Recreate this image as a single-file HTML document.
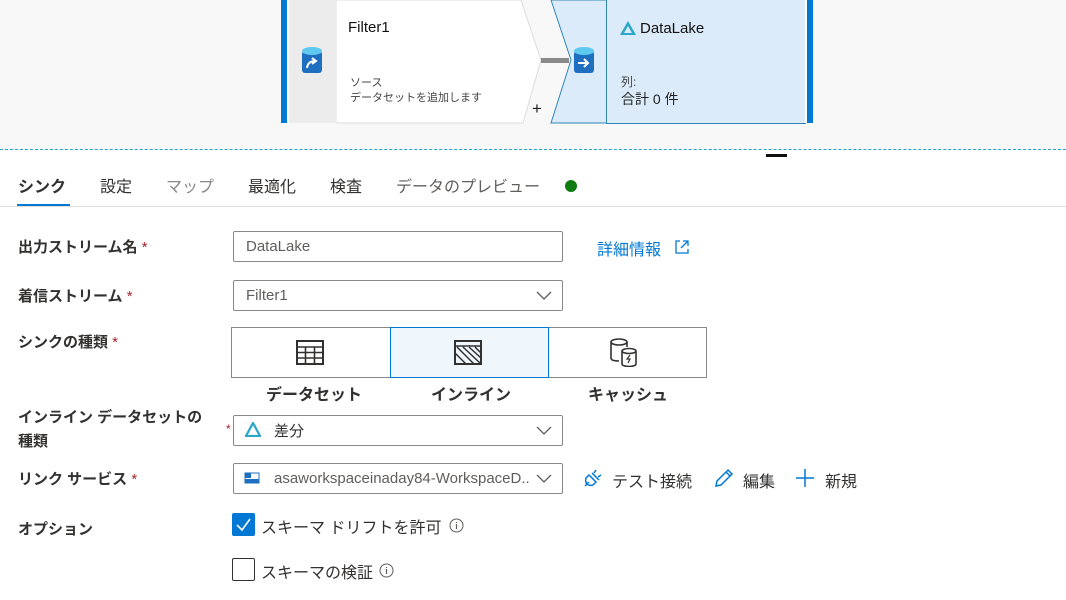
<!DOCTYPE html>
<html><head><meta charset="utf-8"><style>
*{margin:0;padding:0;box-sizing:border-box}
body{width:1066px;height:600px;overflow:hidden;background:#fff;font-family:"Liberation Sans","Noto Sans CJK JP",sans-serif;color:#323130;position:relative}
.a{position:absolute}
.top{left:0;top:0;width:1066px;height:150px;background:#f8f8f8}
.lbl{position:absolute;left:18px;font-size:15px;font-weight:bold;color:#323130}
.req{color:#a4262c;font-weight:normal}
.inp{position:absolute;border:1px solid #8a8886;border-radius:2px;background:#fff;font-size:15px;color:#605e5c;padding-left:12px;display:flex;align-items:center}
.chev{position:absolute;right:10px;top:8px}
.tab{position:absolute;top:173px;font-size:16px;color:#323130}
</style></head><body>
<div class="a top"></div>
<!-- nodes -->
<div class="a" style="left:281px;top:0;width:8px;height:123px;background:#0078d4;border-right:2px solid #fff;box-shadow:inset -2px 0 0 #0078d4"></div>
<div class="a" style="left:289px;top:0;width:47px;height:123px;background:#ececec"></div>
<svg class="a" style="left:300px;top:46px" width="26" height="30" viewBox="0 0 26 30"><rect x="2" y="5" width="20" height="22" rx="3" fill="#1f6fc0"/><ellipse cx="12" cy="5" rx="10" ry="4" fill="#5ec8ef"/><path d="M7 22 Q8 15 15 15 M12 12 L16 15 L12 18" stroke="#fff" stroke-width="2" fill="none"/></svg>
<svg class="a" style="left:336px;top:0" width="280" height="124"><polygon points="0,0 185,0 205,60 187,123 0,123" fill="#fff" stroke="#dcdcdc"/><polygon points="215,0 272,0 272,123 215,123 235,60" fill="#dcebfa" stroke="#2f87b5"/><rect x="205" y="58" width="28" height="5" fill="#8a8a8a"/></svg>
<div class="a" style="left:348px;top:19px;font-size:15px;color:#111">Filter1</div>
<div class="a" style="left:350px;top:76px;font-size:11px;color:#444;line-height:15px">ソース<br>データセットを追加します</div>
<div class="a" style="left:532px;top:99px;font-size:17px;color:#222">+</div>
<svg class="a" style="left:573px;top:46px" width="24" height="30" viewBox="0 0 24 30"><rect x="1" y="5" width="20" height="22" rx="3" fill="#1f6fc0"/><ellipse cx="11" cy="5" rx="10" ry="4" fill="#5ec8ef"/><path d="M5 17 H15 M11 13 L15 17 L11 21" stroke="#fff" stroke-width="2" fill="none"/></svg>
<div class="a" style="left:606px;top:0;width:200px;height:124px;background:#dcebfa;border-left:1px solid #2f87b5;border-bottom:1px solid #2f87b5"></div>
<div class="a" style="left:805px;top:0;width:8px;height:123px;background:#0078d4;border-left:2px solid #fff"></div>
<svg class="a" style="left:619px;top:20px" width="18" height="16" viewBox="0 0 18 16"><path d="M9 1 L17 15 H1 Z M9 6 L13 13 H5 Z" fill="#2aa7c9" fill-rule="evenodd"/></svg>
<div class="a" style="left:640px;top:20px;font-size:15px;color:#111">DataLake</div>
<div class="a" style="left:621px;top:73px;font-size:12px;color:#444">列:</div>
<div class="a" style="left:621px;top:89px;font-size:14px;color:#222">合計 0 件</div>
<div class="a" style="left:0;top:149px;width:1066px;border-top:1px dashed #1ea5d6"></div>
<div class="a" style="left:766px;top:154px;width:21px;height:3px;background:#111"></div>
<!-- tabs -->
<div class="tab" style="left:18px;font-weight:bold">シンク</div>
<div class="tab" style="left:100px">設定</div>
<div class="tab" style="left:166px;color:#8a8886">マップ</div>
<div class="tab" style="left:248px">最適化</div>
<div class="tab" style="left:330px">検査</div>
<div class="tab" style="left:396px;color:#605e5c">データのプレビュー</div>
<div class="a" style="left:565px;top:180px;width:12px;height:12px;border-radius:50%;background:#107c10"></div>
<div class="a" style="left:17px;top:204px;width:53px;height:3px;background:#0078d4"></div>
<div class="a" style="left:0;top:206px;width:1066px;height:1px;background:#e1dfdd"></div>
<!-- form -->
<div class="lbl" style="top:236px">出力ストリーム名 <span class="req">*</span></div>
<div class="inp" style="left:233px;top:231px;width:330px;height:31px">DataLake</div>
<div class="a" style="left:597px;top:236px;font-size:16px;color:#0078d4">詳細情報</div>
<svg class="a" style="left:674px;top:239px" width="16" height="16"><path d="M6 2 H2 V14 H14 V10 M9 2 H14 V7 M14 2 L7 9" stroke="#0078d4" stroke-width="1.3" fill="none"/></svg>
<div class="lbl" style="top:285px">着信ストリーム <span class="req">*</span></div>
<div class="inp" style="left:233px;top:280px;width:330px;height:31px">Filter1<svg class="chev" width="16" height="12"><path d="M1 3 L8 10 L15 3" stroke="#605e5c" stroke-width="1.3" fill="none"/></svg></div>
<div class="lbl" style="top:331px">シンクの種類 <span class="req">*</span></div>
<div class="a" style="left:231px;top:327px;width:476px;height:51px;border:1px solid #8a8886"></div>
<div class="a" style="left:390px;top:327px;width:159px;height:51px;border:1px solid #0078d4;background:#eff6fc"></div>
<svg class="a" style="left:296px;top:340px" width="28" height="25"><rect x="1" y="1" width="26" height="23" fill="none" stroke="#323130" stroke-width="2"/><path d="M1 7 H27 M1 12.5 H27 M1 18 H27 M9.5 7 V24 M18.5 7 V24" stroke="#323130" stroke-width="1.6"/></svg>
<svg class="a" style="left:454px;top:340px" width="28" height="25"><rect x="1" y="1" width="26" height="23" fill="none" stroke="#323130" stroke-width="2"/><path d="M1 6 H27 M3 7 L20 24 M9 7 L26 23 M15 7 L27 18 M21 7 L27 13 M1 13 L12 24" stroke="#323130" stroke-width="1.5"/></svg>
<svg class="a" style="left:609px;top:337px" width="34" height="30"><path d="M2 5 V21 Q2 24 10 24 M2 5 A8 3 0 0 1 18 5 V10 M2 5 A8 3 0 0 0 18 5" stroke="#323130" stroke-width="1.6" fill="none"/><path d="M13 14 V27 A7 2.5 0 0 0 27 27 V14 A7 2.5 0 0 0 13 14 A7 2.5 0 0 0 27 14" stroke="#323130" stroke-width="1.6" fill="#fff"/><path d="M21 18 L18 22 H21 L19 26" stroke="#323130" stroke-width="1.2" fill="none"/></svg>
<div class="a" style="left:266px;top:381px;font-size:16px;font-weight:bold">データセット</div>
<div class="a" style="left:431px;top:381px;font-size:16px;font-weight:bold">インライン</div>
<div class="a" style="left:588px;top:381px;font-size:16px;font-weight:bold">キャッシュ</div>
<div class="lbl" style="top:406px;line-height:24px">インライン データセットの<br>種類</div>
<div class="a" style="left:226px;top:422px;font-size:12px;color:#a4262c">*</div>
<div class="inp" style="left:233px;top:415px;width:330px;height:31px;padding-left:40px;color:#323130">差分<svg class="chev" width="16" height="12"><path d="M1 3 L8 10 L15 3" stroke="#605e5c" stroke-width="1.3" fill="none"/></svg></div>
<svg class="a" style="left:245px;top:422px" width="16" height="15"><path d="M8 1 L15 14 H1 Z" fill="none" stroke="#2aa7c9" stroke-width="2.2"/></svg>
<div class="lbl" style="top:468px">リンク サービス <span class="req">*</span></div>
<div class="inp" style="left:233px;top:463px;width:330px;height:31px;padding-left:40px;color:#605e5c">asaworkspaceinaday84-WorkspaceD..<svg class="chev" width="16" height="12"><path d="M1 3 L8 10 L15 3" stroke="#605e5c" stroke-width="1.3" fill="none"/></svg></div>
<svg class="a" style="left:244px;top:471px" width="16" height="14"><rect x="1" y="2" width="14" height="10" fill="#fff" stroke="#1f6fc0"/><rect x="1" y="2" width="6" height="5" fill="#1f6fc0"/><rect x="1" y="8" width="14" height="4" fill="#1f6fc0"/></svg>
<svg class="a" style="left:582px;top:467px" width="22" height="22"><path d="M3 19 L7 15 M14 3 L12 6 M19 8 L16 10 M7 8 L14 15 L11 18 Q7 19 5 17 Q3 15 4 11 Z M10 6 L17 13" stroke="#0078d4" stroke-width="1.5" fill="none"/></svg>
<div class="a" style="left:612px;top:468px;font-size:16px;color:#323130">テスト接続</div>
<svg class="a" style="left:713px;top:467px" width="22" height="22"><path d="M3 19 L4 14 L15 3 L19 7 L8 18 Z M13 5 L17 9" stroke="#0078d4" stroke-width="1.5" fill="none"/></svg>
<div class="a" style="left:743px;top:468px;font-size:16px">編集</div>
<svg class="a" style="left:795px;top:468px" width="20" height="20"><path d="M10 1 V19 M1 10 H19" stroke="#0078d4" stroke-width="1.5"/></svg>
<div class="a" style="left:825px;top:468px;font-size:16px">新規</div>
<div class="lbl" style="top:518px">オプション</div>
<div class="a" style="left:232px;top:513px;width:23px;height:23px;background:#0078d4;border-radius:2px"></div>
<svg class="a" style="left:235px;top:516px" width="17" height="17"><path d="M2 9 L7 14 L15 3" stroke="#fff" stroke-width="1.6" fill="none"/></svg>
<div class="a" style="left:261px;top:514px;font-size:16px">スキーマ ドリフトを許可</div>
<svg class="a" style="left:449px;top:518px" width="15" height="15"><circle cx="7.5" cy="7.5" r="6.5" fill="none" stroke="#605e5c"/><path d="M7.5 6 V11 M7.5 4 V5" stroke="#605e5c" stroke-width="1.2"/></svg>
<div class="a" style="left:232px;top:558px;width:23px;height:23px;border:1px solid #323130;border-radius:2px"></div>
<div class="a" style="left:261px;top:559px;font-size:16px">スキーマの検証</div>
<svg class="a" style="left:379px;top:563px" width="15" height="15"><circle cx="7.5" cy="7.5" r="6.5" fill="none" stroke="#605e5c"/><path d="M7.5 6 V11 M7.5 4 V5" stroke="#605e5c" stroke-width="1.2"/></svg>
</body></html>
